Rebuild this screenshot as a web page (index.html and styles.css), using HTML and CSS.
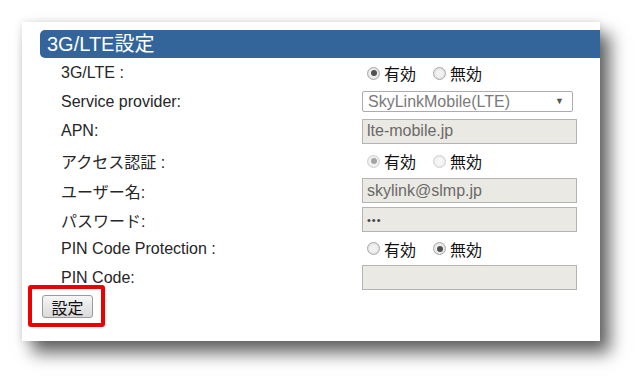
FILE: index.html
```html
<!DOCTYPE html>
<html lang="ja">
<head>
  <meta charset="UTF-8">
  <meta name="viewport" content="width=device-width, initial-scale=1.0">
  <title>3G/LTE設定</title>
  <link rel="stylesheet" href="styles.css">
</head>
<body>
  <div class="card">
    <h2 class="title">3G/LTE設定</h2>
    <form class="rows">
      <div class="lbl">3G/LTE :</div>
      <div class="val">
        <label class="opt"><input type="radio" name="lte" checked> 有効</label>
        <label class="opt"><input type="radio" name="lte"> 無効</label>
      </div>

      <div class="lbl">Service provider:</div>
      <div class="val">
        <div class="select">SkyLinkMobile(LTE)<span class="arrow">&#9660;</span></div>
      </div>

      <div class="lbl">APN:</div>
      <div class="val"><input class="field" type="text" value="lte-mobile.jp" disabled></div>

      <div class="lbl">アクセス認証 :</div>
      <div class="val">
        <label class="opt"><input type="radio" name="auth" checked disabled> 有効</label>
        <label class="opt"><input type="radio" name="auth" disabled> 無効</label>
      </div>

      <div class="lbl">ユーザー名:</div>
      <div class="val"><input class="field" type="text" value="skylink@slmp.jp" disabled></div>

      <div class="lbl">パスワード:</div>
      <div class="val"><input class="field pw" type="password" value="abc" disabled></div>

      <div class="lbl">PIN Code Protection :</div>
      <div class="val">
        <label class="opt"><input type="radio" name="pin"> 有効</label>
        <label class="opt"><input type="radio" name="pin" checked> 無効</label>
      </div>

      <div class="lbl">PIN Code:</div>
      <div class="val"><input class="field" type="text" value="" disabled></div>
    </form>
    <div class="actions">
      <button type="button" class="btn">設定</button>
      <span class="mark"></span>
    </div>
  </div>
</body>
</html>
```

FILE: styles.css
```css
html, body { height: 100%; }
body { margin: 0; padding: 22px 0 0 22px; box-sizing: border-box; background: #fff; font-family: "Liberation Sans", "Noto Sans CJK JP", sans-serif; color: #222; }
.card { width: 578px; height: 311px; padding-top: 8px; background: #fff; box-shadow: 0 0 8px rgba(0,0,0,0.12), 10px 12px 16px rgba(0,0,0,0.6); }
.title { margin: 0 0 0 18px; height: 28px; line-height: 28px; padding-left: 7px; background: #33659a; color: #fff; font-size: 20px; font-weight: normal; border-radius: 5px 0 0 5px; }
.rows { display: grid; grid-template-columns: 301px 215px; grid-template-rows: 28px 29px 30px 30px 29px 29px 29px 29px; margin-top: 1px; padding-left: 39px; font-size: 16px; }
.lbl, .val { display: flex; align-items: center; }
.lbl { color: #262626; }
.opt { display: flex; align-items: center; margin-right: 12px; color: #111; }
.opt input { appearance: none; -webkit-appearance: none; width: 13px; height: 13px; margin: 0 4px 0 5px; border: 1px solid #a8a8a8; border-radius: 50%; background: radial-gradient(circle, #f2f2f2 35%, #d6d6d6 100%); display: grid; place-items: center; }
.opt input:checked::after { content: ""; width: 6px; height: 6px; border-radius: 50%; background: #505050; }
.opt input:disabled { border-color: #d0d0d0; background: radial-gradient(circle, #f6f6f6 35%, #e2e2e2 100%); }
.opt input:disabled:checked::after { background: #a4a4a4; }
.select { position: relative; width: 211px; height: 21px; box-sizing: border-box; border: 1px solid #acacac; border-radius: 2px; padding-left: 5px; line-height: 19px; color: #7a7a7a; background: #fff; }
.arrow { position: absolute; right: 8px; top: 0; font-size: 9px; color: #555; }
.field { width: 215px; height: 25px; box-sizing: border-box; margin: 0; border: 1px solid #b4b4b4; background: #ebe9e3; padding: 0 4px; font: 16px "Liberation Sans", "Noto Sans CJK JP", sans-serif; color: #6a6a6a; }
.field.pw { font-size: 11px; letter-spacing: 1px; color: #444; }
.actions { position: relative; margin-top: 3px; padding-left: 20px; }
.btn { width: 51px; height: 23px; padding: 0; border: 1px solid #9a9a9a; border-radius: 3px; background: linear-gradient(#f6f6f6, #dadada); font: 16px "Noto Sans CJK JP", sans-serif; color: #111; line-height: 20px; }
.mark { position: absolute; left: 6px; top: -10px; width: 69px; height: 34px; border: 4px solid #ee0000; border-radius: 3px; }
```
